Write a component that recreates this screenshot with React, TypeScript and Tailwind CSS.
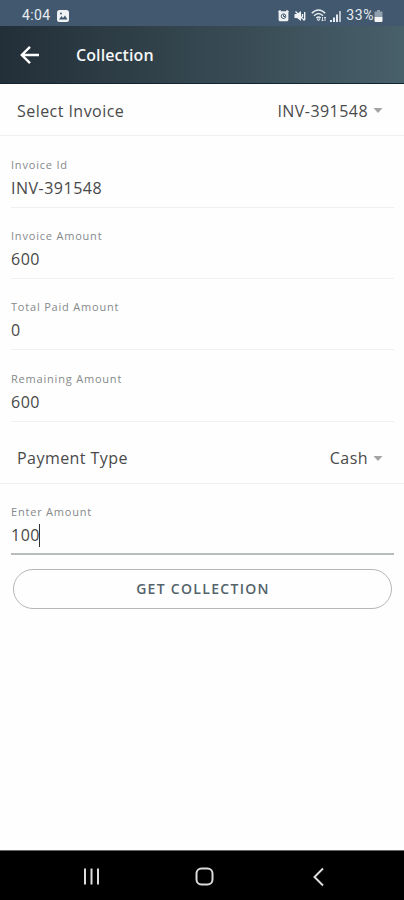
import React from 'react';

const FIELDS = [
  { label: 'Invoice Id', value: 'INV-391548', cls: 'h-[72px] pt-[21px]' },
  { label: 'Invoice Amount', value: '600', cls: 'h-[71px] pt-[20px]' },
  { label: 'Total Paid Amount', value: '0', cls: 'h-[71px] pt-[20px]' },
  { label: 'Remaining Amount', value: '600', cls: 'h-[72px] pt-[21px]' },
];

interface FieldProps {
  label: string;
  value: string;
  className: string;
  focused?: boolean;
}

function Field({ label, value, className, focused }: FieldProps) {
  return (
    <div className={`ml-[11px] mr-[10px] ${className}`}>
      <p className="text-[11px] leading-4 tracking-[0.8px] text-[#85898b]">{label}</p>
      <div className="mt-[4px] flex h-[22px] items-center text-[16px] tracking-[0.5px] text-[#484848]">
        <span>{value}</span>
        {focused && <span className="-ml-px h-[23px] w-px bg-[#333]" />}
      </div>
    </div>
  );
}

function SelectRow({ label, value, className }: { label: string; value: string; className: string }) {
  return (
    <div className={`flex items-center justify-between border-b border-[#f0f0f0] pl-[17px] pr-[21px] text-base tracking-[0.45px] text-[#4a4a4a] ${className}`}>
      <span>{label}</span>
      <span className="flex items-center gap-[5px]">
        <span>{value}</span>
        <svg width="10" height="5" viewBox="0 0 10 5" fill="#a4a4a4"><path d="M.5 0h9L5 5z" /></svg>
      </span>
    </div>
  );
}

function StatusBar() {
  return (
    <div className="flex h-[26px] items-center bg-[#41586e] pl-[22px] pr-[21px] pt-[5px] font-[Roboto] text-[14px] text-[#e8edf1]">
      <span className="tracking-[0.4px]">4:04</span>
      <svg className="ml-[6px]" width="12" height="12" viewBox="0 0 12 12">
        <rect width="12" height="12" rx="2.5" fill="#eef2f5" />
        <path d="M2 9.5 4.5 6 6 8l2-2.5 2.5 4z" fill="#41586e" />
        <circle cx="4" cy="3.6" r="1" fill="#41586e" />
      </svg>
      <div className="ml-auto flex items-center">
        <svg width="11" height="12" viewBox="0 0 11 12" fill="none">
          <path d="M.5 2 2.7.5M10.5 2 8.3.5" stroke="#eef2f5" strokeWidth="1.6" />
          <rect x=".6" y="1.3" width="9.8" height="10" rx="1.5" fill="#eef2f5" />
          <circle cx="5.5" cy="6.2" r="2.3" stroke="#41586e" />
          <path d="M5.5 4.7v1.8H7" stroke="#41586e" />
        </svg>
        <svg className="ml-[5px]" width="12" height="12" viewBox="0 0 12 12" fill="none">
          <path d="M.5 4H3l4-3v10L3 8H.5z" fill="#eef2f5" />
          <path d="m1.5 1.5 9 9M8.5 4v3M10.7 2v8" stroke="#eef2f5" strokeWidth="1.4" />
        </svg>
        <svg className="ml-[5px]" width="17" height="13" viewBox="0 0 17 13" fill="none" stroke="#e4eaef" strokeWidth="1.5">
          <path d="M.8 4.200C5-.2 10-.2 14.200 4.200M3 6.700c3-3 6-3 9 0M5.300 9c1.500-1.400 3-1.400 4.400 0" />
          <path d="M6 10h3l-1.500 2zM11.500 8v4m-1-1 1 1 1-1M14 12V8m-1 1 1-1 1 1" strokeWidth=".9" />
        </svg>
        <svg className="ml-[2px]" width="12" height="12" viewBox="0 0 12 12" fill="#e4eaef">
          <path d="M0 10h2v2H0zM3 7.500h2V12H3zM6 4.500h2V12H6z" />
          <path d="M9 1h2v11H9z" opacity=".7" />
        </svg>
        <span className="ml-[4px] tracking-[0.6px]">33%</span>
        <svg width="9" height="12" viewBox="0 0 9 12">
          <path d="M3 0h3v1.500h2.500V7H.5V1.500H3z" fill="#91a0ad" />
          <path d="M.5 7h8v4a1 1 0 0 1-1 1h-6a1 1 0 0 1-1-1z" fill="#f3f5f7" />
        </svg>
      </div>
    </div>
  );
}

export default function App() {
  return (
    <div className="flex h-[900px] w-[404px] flex-col overflow-hidden bg-[#fefefe] font-['Open_Sans',sans-serif]">
      <StatusBar />

      <header className="flex h-[58px] items-center border-b border-[#142532] bg-linear-to-r from-[#232f38] via-[#354750] to-[#48606a] pl-[20px]">
        <svg width="20" height="20" viewBox="0 0 20 20" fill="none" stroke="#fff" strokeWidth="2.4">
          <path d="M19 10H2M10 1.8 1.8 10l8.2 8.2" />
        </svg>
        <h1 className="ml-[36px] text-base font-semibold tracking-[0.1px] text-[#f4f6f7]">Collection</h1>
      </header>

      <SelectRow label="Select Invoice" value="INV-391548" className="h-[52px] pt-[2px]" />

      {FIELDS.map(f => (
        <React.Fragment key={f.label}>
          <Field label={f.label} value={f.value} className={f.cls} />
          <div className="-mt-px ml-[11px] mr-[10px] h-px shrink-0 bg-[#f0f0f0]" />
        </React.Fragment>
      ))}

      <SelectRow label="Payment Type" value="Cash" className="h-[62px] pt-[11px]" />

      <Field label="Enter Amount" value="100" className="h-[69px] pt-[20px]" focused />
      <div className="ml-[11px] mr-[10px] h-[2px] bg-[#b9bcbc]" />

      <button className="ml-[13px] mr-[12px] mt-[14px] h-[40px] rounded-full border border-[#b4b8b8] pb-[2px] pl-[1px] text-[14px] font-semibold tracking-[1.3px] text-[#54636a]">
        GET COLLECTION
      </button>

      <nav className="mt-auto h-[50px] border-t border-[#666] bg-black">
        <svg width="404" height="49" viewBox="0 0 404 49" fill="none" stroke="#dcdcdc" strokeWidth="2">
          <path d="M85 17.5v16M91.5 17.5v16M98 17.5v16" />
          <rect x="196.5" y="17.5" width="16" height="16" rx="5" />
          <path d="m323 17.5-8.5 8.5 8.5 8.5" />
        </svg>
      </nav>
    </div>
  );
}
